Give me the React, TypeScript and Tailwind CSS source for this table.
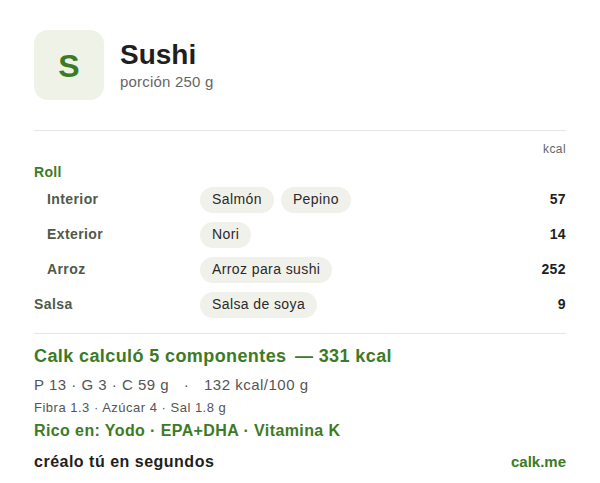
const rows = [
  { label: "Roll", heading: true },
  { label: "Interior", sub: true, chips: ["Salmón", "Pepino"], kcal: 57 },
  { label: "Exterior", sub: true, chips: ["Nori"], kcal: 14 },
  { label: "Arroz", sub: true, chips: ["Arroz para sushi"], kcal: 252 },
  { label: "Salsa", chips: ["Salsa de soya"], kcal: 9 },
];

export default function App() {
  return (
    <div className="min-h-screen bg-white px-[34px] pt-[30px] font-['Liberation_Sans',Arial,sans-serif] text-[#222]">
      {/* header */}
      <div className="flex items-center gap-4">
        <div className="flex h-[70px] w-[70px] items-center justify-center rounded-[14px] bg-[#eef2e7] pt-[2px] text-[32px] font-bold text-[#3c7b26]">
          S
        </div>
        <div className="flex flex-col">
          <div className="text-[28px] font-bold leading-[34px] text-[#1f1f1f]">Sushi</div>
          <div className="text-[15px] leading-5 tracking-[0.2px] text-[#666]">porción 250 g</div>
        </div>
      </div>

      <div className="mt-[30px] border-t border-[#e6e6e6]" />

      {/* components */}
      <div className="pt-[10px]">
        <div className="text-right text-[12px] leading-4 tracking-[0.4px] text-[#666]">kcal</div>
        {rows.map((r) =>
          r.heading ? (
            <div key={r.label} className="mt-[5px] text-[14px] font-bold leading-5 tracking-[0.3px] text-[#3c7b26]">
              {r.label}
            </div>
          ) : (
            <div key={r.label} className="flex h-[35px] items-center tracking-[0.4px]">
              <div
                className={`w-[166px] shrink-0 text-[14px] font-bold text-[#51594b] ${r.sub ? "pl-[13px]" : ""}`}
              >
                {r.label}
              </div>
              <div className="flex flex-1 gap-[7px]">
                {r.chips!.map((c) => (
                  <span
                    key={c}
                    className="flex h-[26px] items-center rounded-full bg-[#f1f1eb] px-3 text-[14px] text-[#2a2a2a]"
                  >
                    {c}
                  </span>
                ))}
              </div>
              <div className="text-[14px] font-bold text-[#1f1f1f]">{r.kcal}</div>
            </div>
          )
        )}
      </div>

      <div className="mt-[11px] border-t border-[#e6e6e6]" />

      {/* summary */}
      <div className="pt-[10px]">
        <div className="text-[18px] font-bold leading-6 tracking-[0.4px] text-[#3c7b26]">
          Calk calculó 5 componentes <span className="ml-[3px]">— 331 kcal</span>
        </div>
        <div className="mt-[7px] text-[15px] leading-5 tracking-[0.5px] text-[#555]">
          P 13 · G 3 · C 59 g <span className="mx-[10px]">·</span> 132 kcal/100 g
        </div>
        <div className="mt-[5px] text-[13px] leading-4 tracking-[0.5px] text-[#555]">
          Fibra 1.3 · Azúcar 4 · Sal 1.8 g
        </div>
        <div className="mt-[5px] text-[16px] font-bold leading-5 tracking-[0.4px] text-[#3c7b26]">
          Rico en: Yodo · EPA+DHA · Vitamina K
        </div>
        <div className="mt-[11px] flex items-center justify-between font-bold leading-5">
          <span className="text-[16px] tracking-[0.5px] text-[#1f1f1f]">créalo tú en segundos</span>
          <span className="text-[15px] text-[#3c7b26]">calk.me</span>
        </div>
      </div>
    </div>
  );
}
